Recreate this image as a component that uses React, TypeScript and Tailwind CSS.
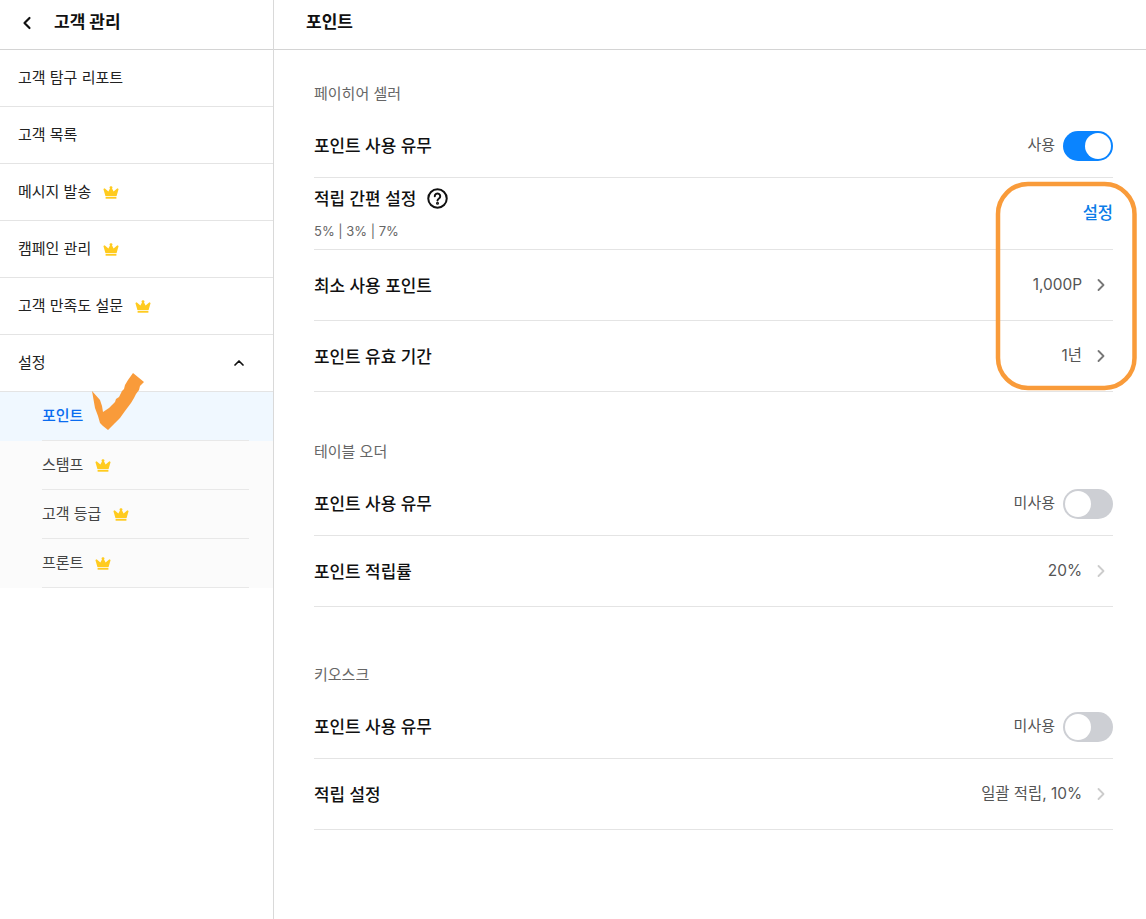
import React from 'react';
import { ChevronLeft, ChevronRight, ChevronUp } from 'lucide-react';

const fontStack = { fontFamily: '"Inter", "Noto Sans CJK KR", sans-serif' };

const Crown = () => (
  <svg width="16" height="13" viewBox="0 0 16 13" className="ml-[12px] shrink-0">
    <path d="M8 0.5 L10.6 5.6 L14.4 2.2 L15.6 3 L13.6 10 H2.4 L0.4 3 L1.6 2.2 L5.4 5.6 Z" fill="#FFCB1F" />
    <circle cx="8" cy="1.6" r="1.4" fill="#FFCB1F" />
    <rect x="2.6" y="10.8" width="10.8" height="1.9" fill="#FFCB1F" />
  </svg>
);

const Toggle = ({ on }: { on: boolean }) => (
  <div className={`flex h-[30px] w-[50px] items-center rounded-full p-[2px] ${on ? 'justify-end bg-[#0A84FF]' : 'justify-start bg-[#CDCFD4]'}`}>
    <div className="h-[26px] w-[26px] rounded-full bg-white" />
  </div>
);

const mainMenu = [
  { label: '고객 탐구 리포트' },
  { label: '고객 목록' },
  { label: '메시지 발송', crown: true },
  { label: '캠페인 관리', crown: true },
  { label: '고객 만족도 설문', crown: true },
];

const subMenu = [
  { label: '포인트', active: true },
  { label: '스탬프', crown: true },
  { label: '고객 등급', crown: true },
  { label: '프론트', crown: true },
];

const Sidebar = () => (
  <aside className="w-[274px] shrink-0 border-r border-[#D9D9D9]">
    <div className="flex h-[50px] items-center border-b border-[#D4D4D4] pb-[3px] pl-[17px]">
      <ChevronLeft size={20} strokeWidth={2.6} className="text-[#111]" />
      <span className="ml-[17px] text-[17px] font-bold text-[#111]">고객 관리</span>
    </div>
    {mainMenu.map((m) => (
      <div key={m.label} className="flex h-[57px] items-center border-b border-[#E4E4E4] pl-[18px] text-[15px] text-[#222]">
        {m.label}
        {m.crown && <Crown />}
      </div>
    ))}
    <div className="flex h-[57px] items-center justify-between border-b border-[#E4E4E4] pl-[18px] pr-[26px] text-[15px] text-[#222]">
      설정
      <ChevronUp size={16} strokeWidth={2.6} className="text-[#111]" />
    </div>
    <div className="bg-[#FBFBFB]">
      {subMenu.map((s) => (
        <div key={s.label} className={`pl-[42px] pr-[24px] ${s.active ? 'bg-[#F0F8FF]' : ''}`}>
          <div className={`flex h-[49px] items-center border-b border-[#E8E8E8] text-[15px] ${s.active ? 'font-medium text-[#0A6CF0]' : 'text-[#444]'}`}>
            {s.label}
            {s.crown && <Crown />}
          </div>
        </div>
      ))}
    </div>
  </aside>
);

const Row = ({ title, value, dim }: { title: string; value: string; dim?: boolean }) => (
  <div className="flex h-[71px] items-center justify-between border-b border-[#E4E4E4]">
    <span className="pt-[3px] text-[16.9px] font-medium text-[#111]">{title}</span>
    <div className="flex items-center">
      <span className="text-[15.4px] text-[#555]">{value}</span>
      <ChevronRight size={20} strokeWidth={2.2} className={`ml-[9px] mr-[2px] ${dim ? 'text-[#CCCCCC]' : 'text-[#777]'}`} />
    </div>
  </div>
);

const ToggleRow = ({ on }: { on: boolean }) => (
  <div className="flex h-[64px] items-center justify-between border-b border-[#E4E4E4]">
    <span className="pt-[2px] text-[16.9px] font-medium text-[#111]">포인트 사용 유무</span>
    <div className="flex items-center gap-[8px]">
      <span className="text-[15px] text-[#555]">{on ? '사용' : '미사용'}</span>
      <Toggle on={on} />
    </div>
  </div>
);

const SectionTitle = ({ children }: { children: React.ReactNode }) => (
  <div className="flex h-[40px] items-center text-[15px] text-[#666]">{children}</div>
);

export default function App() {
  return (
    <div className="relative flex h-[919px] w-[1146px] overflow-hidden bg-white" style={fontStack}>
      <Sidebar />
      <main className="flex-1">
        <div className="flex h-[50px] items-center border-b border-[#D4D4D4] pb-[3px] pl-[32px] text-[17px] font-bold text-[#111]">포인트</div>
        <div className="pl-[40px] pr-[33px] pt-[24px]">
          <SectionTitle>페이히어 셀러</SectionTitle>
          <ToggleRow on />
          <div className="flex h-[72px] items-center justify-between border-b border-[#E4E4E4]">
            <div className="-mt-[1px]">
              <div className="flex items-center text-[16.9px] font-medium leading-[22px] text-[#111]">
                적립 간편 설정
                <svg width="21" height="21" viewBox="0 0 20 20" className="ml-[11px]" fill="none" stroke="#111" strokeWidth="1.9">
                  <circle cx="10" cy="10" r="8.8" />
                  <path d="M7.4 7.8 a2.6 2.6 0 1 1 4 2.2 c-.9.6-1.4 1-1.4 2" strokeLinecap="round" />
                  <circle cx="10" cy="14.6" r="0.5" fill="#111" />
                </svg>
              </div>
              <div className="mt-[13px] text-[13px] leading-[16px] text-[#666]">5% | 3% | 7%</div>
            </div>
            <span className="text-[16.5px] font-medium text-[#0A7CE8]">설정</span>
          </div>
          <Row title="최소 사용 포인트" value="1,000P" />
          <Row title="포인트 유효 기간" value="1년" />

          <div className="mt-[40px]">
            <SectionTitle>테이블 오더</SectionTitle>
            <ToggleRow on={false} />
            <Row title="포인트 적립률" value="20%" dim />
          </div>

          <div className="mt-[48px]">
            <SectionTitle>키오스크</SectionTitle>
            <ToggleRow on={false} />
            <Row title="적립 설정" value="일괄 적립, 10%" dim />
          </div>
        </div>
      </main>

      {/* hand drawn marks on top of the screenshot */}
      <svg width="1146" height="919" viewBox="0 0 1146 919" className="pointer-events-none absolute left-0 top-0">
        <path
          d="M92 391 L100 400 L102 406 L103 412 L109 408 L112 405 L115 402 L116 399 L119 397 L122 391 L124 389 L125 385 L128 380 L133 373 L144 382 L140 386 L139 390 L136 394 L134 398 L131 403 L128 407 L125 411 L120 418 L115 423 L108 430 L103 426 L100 423 L98 416 L95 408 Z"
          fill="#F99B3A"
        />
        <rect x="998" y="184" width="136.5" height="204" rx="30" fill="none" stroke="#F99B3A" strokeWidth="4.5" />
      </svg>
    </div>
  );
}
